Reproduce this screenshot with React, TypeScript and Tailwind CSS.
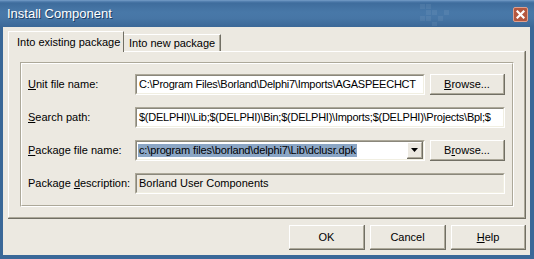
import React from "react";

const F = { fontFamily: '"Liberation Sans", Arial, sans-serif' };

function Raised({ className = "", children }: { className?: string; children?: React.ReactNode }) {
  return (
    <div className={"border-r border-b border-[#716f64] " + className}>
      <div className="h-full w-full border-t border-l border-t-white border-l-white border-r border-b border-r-[#aca899] border-b-[#aca899] flex items-center justify-center">
        {children}
      </div>
    </div>
  );
}

function Sunken({ className = "", children, bg = "bg-white" }: { className?: string; children?: React.ReactNode; bg?: string }) {
  return (
    <div className={"border-t border-l border-t-[#aca899] border-l-[#aca899] border-r border-b border-r-white border-b-white " + className}>
      <div className={"h-full w-full border-t border-l border-t-[#8a877b] border-l-[#8a877b] border-r border-b border-r-[#f1efe2] border-b-[#f1efe2] flex items-center overflow-hidden " + bg}>
        {children}
      </div>
    </div>
  );
}

function Row({ label, children }: { label: React.ReactNode; children: React.ReactNode }) {
  return (
    <div className="flex h-[21px] items-center">
      <div className="w-[107px] text-[11px] text-black leading-none">{label}</div>
      {children}
    </div>
  );
}

export default function App() {
  return (
    <div style={F} className="w-[534px] h-[259px] bg-[#3a6898] flex flex-col overflow-hidden relative">
      {/* title bar */}
      <div className="h-[27px] flex items-center relative bg-[linear-gradient(to_bottom,#7ba2cb_0px,#5a86b5_1px,#3e6c9c_3px,#4878a8_12px,#4776a6_18px,#3b6897_27px)]">
        <span className="ml-[7px] text-[13px] text-white [text-shadow:1px_1px_0_#1d3d63]">Install Component</span>
        <svg className="absolute left-[420px] top-[4px]" width="32" height="22" viewBox="0 0 32 22">
          <g fill="#ffffff" opacity="0.06">
            <rect x="0" y="0" width="5" height="5" />
            <rect x="6" y="0" width="5" height="5" />
            <rect x="6" y="6" width="5" height="5" />
            <rect x="12" y="6" width="5" height="5" />
            <rect x="18" y="12" width="5" height="5" />
            <rect x="6" y="12" width="5" height="5" />
            <rect x="12" y="18" width="5" height="4" />
            <rect x="0" y="12" width="5" height="5" />
            <rect x="24" y="6" width="5" height="5" />
          </g>
        </svg>
        <div className="absolute left-[513px] top-[7px] w-[15px] h-[15px] rounded-[2px] border border-[#dfa08e] bg-[#b4573f] flex items-center justify-center">
          <svg width="9" height="9" viewBox="0 0 9 9">
            <path d="M1.5 1.5 L7.5 7.5 M7.5 1.5 L1.5 7.5" stroke="white" strokeWidth="2.2" strokeLinecap="square" />
          </svg>
        </div>
      </div>
      {/* body */}
      <div className="flex-1 ml-[3px] mr-[4px] mb-[4px] bg-[#ece9e1] flex flex-col pl-[5px] pt-[4px]">
        {/* tabs */}
        <div className="flex items-end h-[20px] relative z-10">
          <div className="w-[116px] h-[21px] -mb-[1px] bg-[#ece9e1] border-t border-l border-t-white border-l-white border-r border-r-[#716f64] flex items-start pl-[8px] pt-[5px] text-[11px] leading-none">
            Into existing package
          </div>
          <div className="w-[97px] h-[17px] bg-[#ece9e1] border-t border-t-white border-r border-r-[#716f64] flex items-start pl-[5px] pt-[3px] text-[11px] leading-none shadow-[inset_-1px_0_0_#aca899]">
            Into new package
          </div>
        </div>
        {/* panel */}
        <div className="w-[518px] h-[168px] border-r border-b border-[#716f64]">
          <div className="h-full w-full border-t border-l border-t-white border-l-white border-r border-b border-r-[#aca899] border-b-[#aca899] pl-[11px] pt-[10px] pr-[10px] pb-[10px] flex">
            {/* group */}
            <div className="flex-1 border-t border-l border-t-[#aca899] border-l-[#aca899] border-r border-b border-r-white border-b-white">
              <div className="h-full w-full border-t border-l border-t-white border-l-white border-r border-b border-r-[#aca899] border-b-[#aca899] pl-[6px] pt-[10px] flex flex-col gap-[12px]">
                <Row label={<><u>U</u>nit file name:</>}>
                  <Sunken className="w-[290px] h-[21px]">
                    <span className="pl-[2px] text-[11px] tracking-[-0.25px] whitespace-nowrap">C:\Program Files\Borland\Delphi7\Imports\AGASPEECHCT</span>
                  </Sunken>
                  <Raised className="ml-[5px] w-[75px] h-[21px]">
                    <span className="text-[11px]"><u>B</u>rowse...</span>
                  </Raised>
                </Row>
                <Row label={<><u>S</u>earch path:</>}>
                  <Sunken className="w-[370px] h-[21px]">
                    <span className="pl-[2px] text-[11px] tracking-[-0.25px] whitespace-nowrap">$(DELPHI)\Lib;$(DELPHI)\Bin;$(DELPHI)\Imports;$(DELPHI)\Projects\Bpl;$</span>
                  </Sunken>
                </Row>
                <Row label={<><u>P</u>ackage file name:</>}>
                  <Sunken className="w-[290px] h-[21px]">
                    <div className="flex-1 h-full flex items-center pl-[1px]">
                      <span className="bg-[#8ba6c5] px-[1px] text-[11px] tracking-[-0.15px] leading-[13px] whitespace-nowrap">c:\program files\borland\delphi7\Lib\dclusr.dpk</span>
                    </div>
                    <div className="w-[16px] h-[17px] border-r border-b border-[#716f64]">
                      <div className="h-full w-full bg-[#ece9e1] border-t border-l border-t-white border-l-white border-r border-b border-r-[#aca899] border-b-[#aca899] flex items-center justify-center">
                        <svg width="7" height="4" viewBox="0 0 7 4"><path d="M0 0 H7 L3.5 4 Z" fill="black" /></svg>
                      </div>
                    </div>
                  </Sunken>
                  <Raised className="ml-[5px] w-[75px] h-[21px]">
                    <span className="text-[11px]">B<u>r</u>owse...</span>
                  </Raised>
                </Row>
                <Row label={<>Package <u>d</u>escription:</>}>
                  <Sunken className="w-[370px] h-[21px]" bg="bg-[#ece9e1]">
                    <span className="pl-[2px] text-[11px] whitespace-nowrap">Borland User Components</span>
                  </Sunken>
                </Row>
              </div>
            </div>
          </div>
        </div>
        {/* buttons */}
        <div className="flex justify-end gap-[5px] mt-[6px] w-[518px]">
          <Raised className="w-[76px] h-[25px]"><span className="text-[11px]">OK</span></Raised>
          <Raised className="w-[76px] h-[25px]"><span className="text-[11px]">Cancel</span></Raised>
          <Raised className="w-[75px] h-[25px]"><span className="text-[11px]"><u>H</u>elp</span></Raised>
        </div>
      </div>
    </div>
  );
}
